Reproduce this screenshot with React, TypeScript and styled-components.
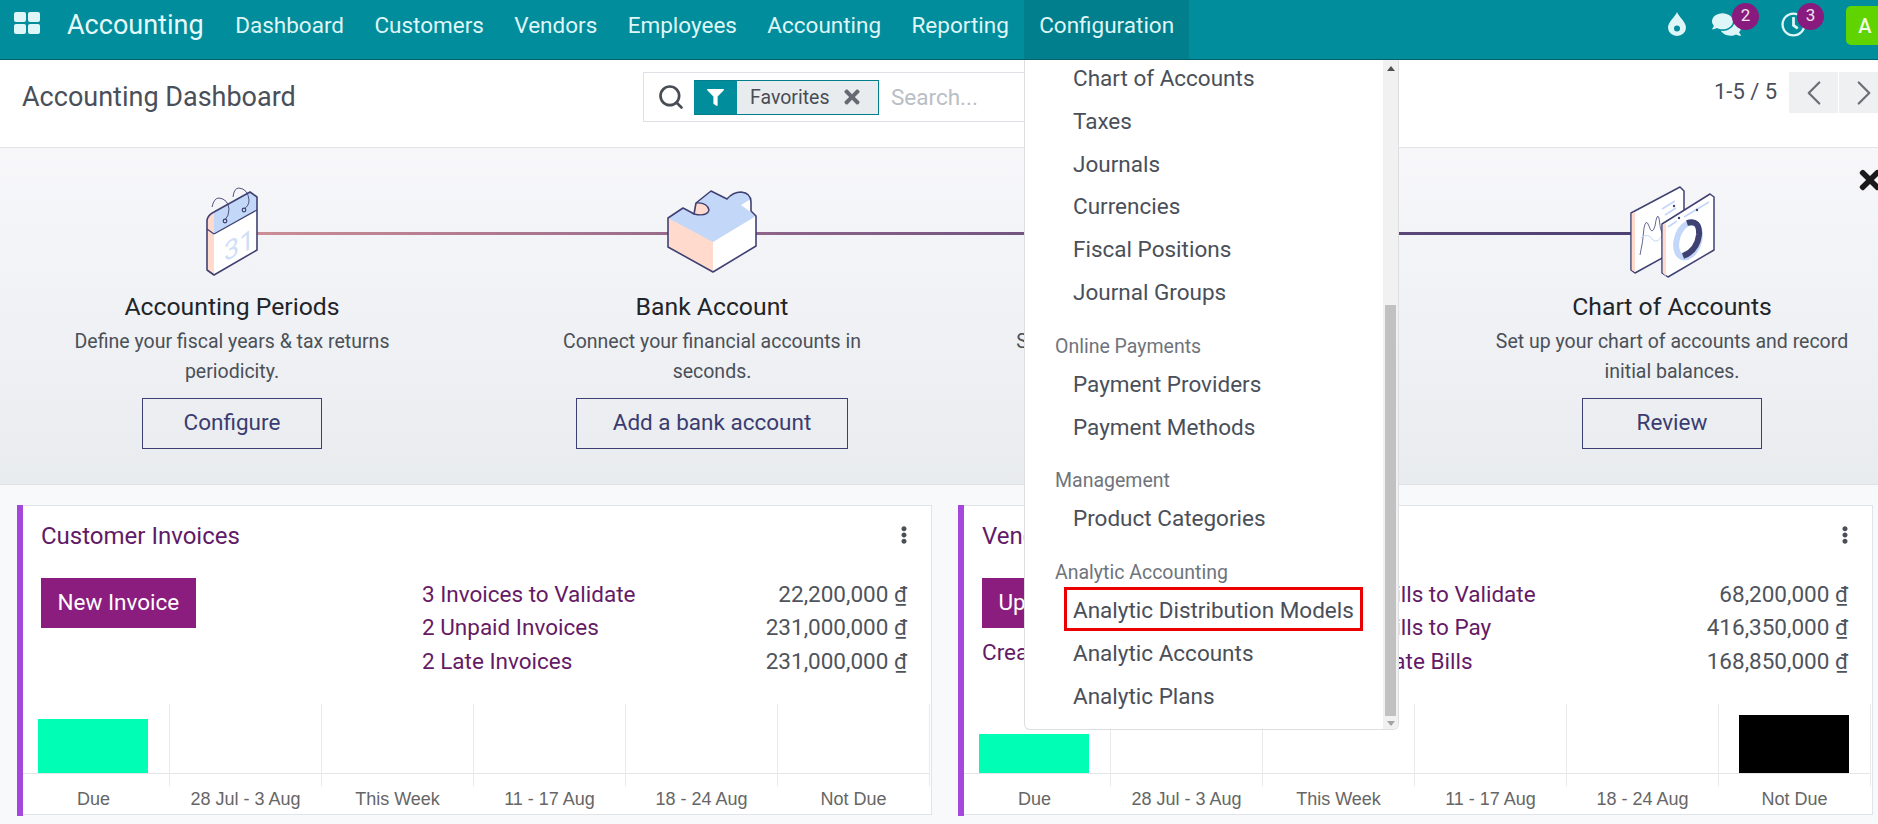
import React from "react";
import styled, { createGlobalStyle } from "styled-components";
import { FaComments, FaEllipsisV, FaFilter, FaRegClock, FaTimes } from "react-icons/fa";
import { Search, ChevronLeft, ChevronRight } from "lucide-react";

const GlobalStyle = createGlobalStyle`
  html, body {
    margin: 0;
    width: 1878px;
    height: 824px;
    overflow: hidden;
    background: #f8f9fa;
    font-family: Roboto, "Liberation Sans", sans-serif;
    color: #4a4f59;
  }
`;

const Page = styled.div`
  width: 1878px;
  height: 824px;
  overflow: hidden;
  display: flex;
  flex-direction: column;
`;

/* top bar */
const NavBar = styled.nav`
  position: relative;
  z-index: 5;
  flex: none;
  display: flex;
  height: 60px;
  box-sizing: border-box;
  background: #018d9b;
  border-bottom: 1px solid #00626c;
  color: #dff6f8;
`;
const AppsButton = styled.div`
  width: 67px;
  height: 45px;
  padding-left: 14px;
  box-sizing: border-box;
  display: flex;
  align-items: center;
`;
const Brand = styled.div`
  display: flex;
  align-items: center;
  height: 50px;
  width: 153px;
  font-size: 27px;
  color: #e6f9fa;
`;
const NavItem = styled.div<{ $active?: boolean }>`
  position: relative;
  display: flex;
  align-items: center;
  height: 59px;
  box-sizing: border-box;
  padding: 0 15.2px 9px;
  font-size: 22.5px;
  background: ${(p) => (p.$active ? "#017f8c" : "transparent")};
`;
const Tray = styled.div`
  margin-left: auto;
  margin-right: -6px;
  display: flex;
  align-items: flex-start;
`;
const TrayCell = styled.div<{ $w: number }>`
  position: relative;
  width: ${(p) => p.$w}px;
  height: 48px;
  display: flex;
  align-items: center;
  justify-content: center;
`;
const Badge = styled.span<{ $left: number }>`
  position: absolute;
  left: ${(p) => p.$left}px;
  top: 3px;
  width: 27px;
  height: 27px;
  border-radius: 50%;
  background: #891b7e;
  color: #f3e6f1;
  font-size: 17px;
  line-height: 25px;
  text-align: center;
`;
const Avatar = styled.div`
  margin: 6px 0 0 13px;
  width: 38px;
  height: 39px;
  border-radius: 5px;
  background: #5fd400;
  color: #f0fbe4;
  font-size: 20px;
  font-weight: 500;
  line-height: 40px;
  text-align: center;
`;

/* dropdown */
const Menu = styled.div`
  position: absolute;
  left: 0;
  top: 100%;
  margin-top: 1px;
  width: 375px;
  height: 670px;
  box-sizing: border-box;
  display: flex;
  background: #fff;
  border: 1px solid #dcdee1;
  border-top: none;
  border-radius: 0 0 6px 6px;
  color: #4a4f59;
  overflow: hidden;
`;
const MenuBody = styled.div`
  flex: 1;
  margin-top: -3px;
`;
const MenuHeader = styled.div`
  margin-top: 16px;
  height: 33px;
  padding-left: 30px;
  font-size: 19.5px;
  line-height: 33px;
  color: #6f747c;
`;
const MenuItem = styled.div`
  position: relative;
  height: 42.8px;
  padding-left: 48px;
  font-size: 22.5px;
  line-height: 42.8px;
`;
const Highlight = styled.span`
  position: absolute;
  left: 39px;
  top: -2px;
  width: 299px;
  height: 44px;
  box-sizing: border-box;
  border: 3px solid #ea0000;
`;
const ScrollBar = styled.div`
  flex: none;
  width: 15px;
  background: #f1f1f1;
  display: flex;
  flex-direction: column;
  align-items: center;
`;
const ArrowUp = styled.span`
  margin-top: 6px;
  border: 4px solid transparent;
  border-top: none;
  border-bottom: 5px solid #505050;
`;
const ArrowDown = styled.span`
  margin-top: 5px;
  border: 4px solid transparent;
  border-bottom: none;
  border-top: 5px solid #a3a3a3;
`;
const Thumb = styled.span`
  margin-top: 234px;
  width: 11px;
  height: 411px;
  background: #c1c1c1;
`;

/* control panel */
const ControlPanel = styled.div`
  flex: none;
  height: 88px;
  box-sizing: border-box;
  display: grid;
  grid-template-columns: 621px 1071px 1fr;
  padding: 12px 0 0 22px;
  background: #fff;
  border-bottom: 1.5px solid #e1e3e6;
`;
const Title = styled.div`
  height: 50px;
  font-size: 27px;
  line-height: 50px;
`;
const SearchBox = styled.div`
  width: 600px;
  height: 50px;
  box-sizing: border-box;
  display: flex;
  align-items: center;
  padding-left: 13px;
  border: 1.5px solid #dee2e6;
  color: #484d55;
`;
const Facet = styled.div`
  margin-left: 9px;
  height: 35px;
  width: 185px;
  box-sizing: border-box;
  display: flex;
  align-items: center;
  border: 1.5px solid #017e8c;
  background: #e9ecef;
  font-size: 19.5px;
`;
const FacetIcon = styled.span`
  align-self: stretch;
  width: 43px;
  margin-left: -1px;
  display: flex;
  align-items: center;
  justify-content: center;
  background: #018d9b;
  color: #fff;
`;
const FacetLabel = styled.span`
  flex: 1;
  padding-left: 13px;
`;
const FacetClose = styled.span`
  display: flex;
  margin-right: 15px;
  color: #666a72;
`;
const SearchHint = styled.span`
  margin-left: 12px;
  font-size: 22.5px;
  color: #b9bec5;
`;
const Pager = styled.div`
  display: flex;
  align-items: flex-start;
  gap: 1px;
  font-size: 22px;
`;
const PagerText = styled.span`
  width: 74px;
  line-height: 41px;
  margin-top: -1px;
`;
const PagerButton = styled.span`
  flex: none;
  width: 49px;
  height: 41px;
  display: flex;
  align-items: center;
  justify-content: center;
  background: #eff0f2;
  color: #6b6f76;
`;

/* onboarding banner */
const Banner = styled.div`
  position: relative;
  flex: none;
  height: 337px;
  box-sizing: border-box;
  background: linear-gradient(#f7f7fa, #e9ecef);
  border-bottom: 1.5px solid #dee2e6;
`;
const Steps = styled.div`
  position: relative;
  width: 1920px;
  margin-left: -8px;
  padding-top: 34px;
  display: grid;
  grid-template-columns: repeat(4, 480px);

  &::before {
    content: "";
    position: absolute;
    left: 240px;
    width: 1440px;
    top: 84px;
    height: 3px;
    background: linear-gradient(90deg, #cf8f96, #94688a 33%, #6b4f7f 60%, #4b4070);
  }
`;
const Step = styled.div`
  position: relative;
  display: flex;
  flex-direction: column;
  align-items: center;
`;
const StepIcon = styled.div`
  height: 100px;
  display: flex;
  align-items: center;
  justify-content: center;
`;
const StepTitle = styled.div`
  margin-top: 7px;
  font-size: 24.75px;
  line-height: 36px;
  color: #212529;
`;
const StepText = styled.div`
  margin-top: 2px;
  width: 360px;
  font-size: 19.5px;
  line-height: 30px;
  text-align: center;
  color: #4b5058;
`;
const StepButton = styled.div`
  margin-top: 11px;
  min-width: 180px;
  height: 51px;
  box-sizing: border-box;
  padding: 0 36px;
  border: 1.5px solid #3d3f72;
  font-size: 22.5px;
  line-height: 46px;
  text-align: center;
  color: #3a3c70;
`;
const BannerClose = styled.span`
  position: absolute;
  left: 1855px;
  top: 17px;
  display: flex;
  color: #1a1a1a;
`;

/* journal cards */
const Cards = styled.div`
  display: flex;
  gap: 26px;
  padding: 20px 0 0 17px;
`;
const Card = styled.div`
  position: relative;
  flex: none;
  width: 915px;
  height: 310px;
  box-sizing: border-box;
  display: flex;
  flex-direction: column;
  background: #fff;
  border: 1.5px solid #e1e4e8;

  &::before {
    content: "";
    position: absolute;
    z-index: 1;
    left: -1.5px;
    top: -1.5px;
    bottom: -1.5px;
    width: 6px;
    background: #a546dd;
  }
`;
const CardHead = styled.div`
  height: 72px;
  flex: none;
  box-sizing: border-box;
  display: flex;
  justify-content: space-between;
  padding: 12px 18.5px 0 23px;
`;
const CardTitle = styled.div`
  font-size: 24px;
  line-height: 36px;
  color: #611a66;
`;
const Kebab = styled.span`
  margin-top: 8px;
  color: #4b5058;
`;
const CardBody = styled.div`
  display: grid;
  grid-template-columns: 381px 1fr;
  padding: 0 24px 0 23px;
  height: 126px;
`;
const PrimaryButton = styled.div`
  width: fit-content;
  height: 50px;
  padding: 0 16.5px;
  background: #8a1d7e;
  color: #fff;
  font-size: 22.5px;
  line-height: 48px;
`;
const CreateLink = styled.div`
  margin-top: 8px;
  font-size: 22.5px;
  line-height: 33px;
  color: #641a66;
`;
const StatRow = styled.div`
  display: flex;
  justify-content: space-between;
  height: 33.4px;
  font-size: 22.5px;
  line-height: 33.4px;
`;
const StatLink = styled.span`
  color: #641a66;
`;
const Amount = styled.span`
  color: #4f545c;
`;

const Chart = styled.div`
  display: grid;
  grid-template-columns: repeat(6, 152px);
`;
const Plot = styled.div`
  height: 82px;
  box-sizing: border-box;
  border-right: 1.5px solid #e9eaec;
`;
const PlotArea = styled.div`
  height: 70px;
  box-sizing: border-box;
  display: flex;
  align-items: flex-end;
  justify-content: center;
  padding-right: 2px;
  border-bottom: 1.5px solid #e4e5e8;
`;
const Bar = styled.div<{ $h: number; $color: string }>`
  width: 110px;
  height: ${(p) => p.$h}px;
  background: ${(p) => p.$color};
`;
const AxisLabel = styled.div`
  height: 27px;
  padding-right: 1px;
  font-family: "Liberation Sans", Arial, sans-serif;
  font-size: 18px;
  line-height: 27px;
  text-align: center;
  color: #666;
`;

const AppsIcon = () => (
  <svg width="26" height="22" viewBox="0 0 26 22" fill="#dff6f8">
    <rect width="12" height="10" rx="2" />
    <rect x="14" width="12" height="10" rx="2" />
    <rect y="12" width="12" height="10" rx="2" />
    <rect x="14" y="12" width="12" height="10" rx="2" />
  </svg>
);

const DropIcon = () => (
  <svg width="18" height="24" viewBox="0 0 18 24">
    <path d="M9 0C11 5 18 10 18 15.5A9 8.5 0 0 1 0 15.5C0 10 7 5 9 0Z" fill="#dff6f8" />
    <circle cx="9" cy="16.5" r="3" fill="#018d9b" />
  </svg>
);

const CalendarIcon = () => (
  <svg width="52" height="90" viewBox="0 0 52 90" strokeLinejoin="round">
    <path d="M1 33L8 25L44 5L51 10V63L8 88L1 83Z" fill="#fff" />
    <path d="M1 33L8 25V88L1 83Z" fill="#ffdacd" />
    <path d="M1 33Q2 28 8 25L44 5L51 10V23L8 47L1 42Z" fill="#c3d7f8" />
    <path d="M1 33Q2 28 8 25V47L1 42Z" fill="#ffdacd" />
    <path d="M8 47L51 23" fill="none" stroke="#3f4173" strokeWidth="1.2" />
    <path d="M1 42L8 47" fill="none" stroke="#3f4173" strokeWidth="1.2" />
    <path d="M1 33Q2 28 8 25L44 5L51 10V63L8 88L1 83Z" fill="none" stroke="#3f4173" strokeWidth="1.6" />
    <path d="M6 20Q8 11 13 11Q22 12 23 22Q23 29 19 33" fill="none" stroke="#3f4173" strokeWidth="0.9" />
    <path d="M27 10Q28 1 33 1Q42 2 43 13Q43 19 38 22" fill="none" stroke="#3f4173" strokeWidth="0.9" />
    <circle cx="19" cy="34" r="1.8" fill="#c3d7f8" stroke="#3f4173" strokeWidth="1.2" />
    <circle cx="38" cy="23" r="1.8" fill="#c3d7f8" stroke="#3f4173" strokeWidth="1.2" />
    <text x="0" y="0" transform="matrix(1 -0.5 0 1 18 75)" fontFamily="Roboto, sans-serif" fontSize="27" fill="#cfdff6">
      31
    </text>
  </svg>
);

const PuzzleIcon = () => (
  <svg width="90" height="84" viewBox="0 0 90 84" strokeLinejoin="round">
    <path
      d="M1 28L16 18Q22 21 27 24L29 13L44 1L60 9Q66 2 74 2Q84 3 84 12V21L89 26V56L46 82L1 57Z"
      fill="#c3d7f8"
    />
    <path d="M1 28L46 52V82L1 57Z" fill="#ffdacd" />
    <path d="M46 52L89 26V56L46 82Z" fill="#fff" />
    <path d="M74 15L84 9V21L89 26Z" fill="#fff" />
    <path d="M29 13Q40 12 42 20Q40 27 27 24Z" fill="#ffdacd" />
    <path
      d="M1 28L16 18Q22 21 27 24L29 13L44 1L60 9Q66 2 74 2Q84 3 84 12V21L89 26V56L46 82L1 57Z"
      fill="none"
      stroke="#3f4173"
      strokeWidth="1.6"
    />
    <path d="M29 13Q40 12 42 20Q40 27 27 24" fill="none" stroke="#3f4173" strokeWidth="1.4" />
  </svg>
);

const ReportIcon = () => (
  <svg width="85" height="92" viewBox="0 0 85 92" strokeLinejoin="round" fill="none">
    <path d="M1 27L50 1L54 5V60L5 87L1 84Z" fill="#fff" stroke="#3f4173" strokeWidth="1.5" />
    <path d="M1.8 27.5L5 26V86L1.8 84Z" fill="#ffdacd" />
    <path d="M32 23L45 15M35 29L46 22" stroke="#c3d7f8" strokeWidth="1.6" />
    <circle cx="44" cy="20" r="1.2" fill="#3f4173" />
    <path d="M10 69Q13 56 14 42Q16 32 19 40Q22 50 25 40Q27 26 29 32Q30 44 33 50" stroke="#3f4173" strokeWidth="0.8" />
    <path d="M11 52Q18 46 23 54Q28 58 33 48" stroke="#c3d7f8" strokeWidth="1" />
    <path d="M32 38L80 8L84 11V64L38 91L32 87Z" fill="#fff" stroke="#3f4173" strokeWidth="1.5" />
    <path d="M32.8 38.5L36 37V90L32.8 87Z" fill="#ffdacd" />
    <path d="M38 41L47 35M54 31L79 16" stroke="#c3d7f8" strokeWidth="1.6" />
    <circle cx="49" cy="32" r="1.2" fill="#3f4173" />
    <circle cx="67" cy="24" r="1.2" fill="#3f4173" />
    <ellipse cx="58" cy="54" rx="11" ry="18" transform="rotate(18 58 54)" stroke="#c3d7f8" strokeWidth="6" />
    <path d="M57 37Q70 33 69 49Q67 65 53 70" stroke="#3f4173" strokeWidth="6" />
  </svg>
);

const menuGroups = [
  { items: ["Chart of Accounts", "Taxes", "Journals", "Currencies", "Fiscal Positions", "Journal Groups"] },
  { title: "Online Payments", items: ["Payment Providers", "Payment Methods"] },
  { title: "Management", items: ["Product Categories"] },
  { title: "Analytic Accounting", items: ["Analytic Distribution Models", "Analytic Accounts", "Analytic Plans"] },
];

const steps = [
  { title: "Accounting Periods", text: "Define your fiscal years & tax returns periodicity.", action: "Configure", icon: <CalendarIcon /> },
  { title: "Bank Account", text: "Connect your financial accounts in seconds.", action: "Add a bank account", icon: <PuzzleIcon /> },
  { title: "Taxes", text: "Set default Taxes for sales and purchase transactions.", action: "Review", icon: null },
  { title: "Chart of Accounts", text: "Set up your chart of accounts and record initial balances.", action: "Review", icon: <ReportIcon /> },
];

const axis = ["Due", "28 Jul - 3 Aug", "This Week", "11 - 17 Aug", "18 - 24 Aug", "Not Due"];

const cards = [
  {
    title: "Customer Invoices",
    action: "New Invoice",
    stats: [
      ["3 Invoices to Validate", "22,200,000"],
      ["2 Unpaid Invoices", "231,000,000"],
      ["2 Late Invoices", "231,000,000"],
    ],
    bars: [54, 0, 0, 0, 0, 0],
  },
  {
    title: "Vendor Bills",
    action: "Upload",
    link: "Create Manually",
    stats: [
      ["3 Bills to Validate", "68,200,000"],
      ["5 Bills to Pay", "416,350,000"],
      ["4 Late Bills", "168,850,000"],
    ],
    bars: [39, 0, 0, 0, 0, 58],
  },
];

export default function App() {
  return (
    <Page>
      <GlobalStyle />
      <NavBar>
        <AppsButton>
          <AppsIcon />
        </AppsButton>
        <Brand>Accounting</Brand>
        {["Dashboard", "Customers", "Vendors", "Employees", "Accounting", "Reporting"].map((n) => (
          <NavItem key={n}>{n}</NavItem>
        ))}
        <NavItem $active>
          Configuration
          <Menu>
            <MenuBody>
              {menuGroups.map((g, i) => (
                <div key={i}>
                  {g.title && <MenuHeader>{g.title}</MenuHeader>}
                  {g.items.map((item) => (
                    <MenuItem key={item}>
                      {item}
                      {item === "Analytic Distribution Models" && <Highlight />}
                    </MenuItem>
                  ))}
                </div>
              ))}
            </MenuBody>
            <ScrollBar>
              <ArrowUp />
              <Thumb />
              <ArrowDown />
            </ScrollBar>
          </Menu>
        </NavItem>
        <Tray>
          <TrayCell $w={44}>
            <DropIcon />
          </TrayCell>
          <TrayCell $w={54}>
            <FaComments size={29} />
            <Badge $left={33}>2</Badge>
          </TrayCell>
          <TrayCell $w={80}>
            <FaRegClock size={25} />
            <Badge $left={44}>3</Badge>
          </TrayCell>
          <Avatar>A</Avatar>
        </Tray>
      </NavBar>

      <ControlPanel>
        <Title>Accounting Dashboard</Title>
        <div>
          <SearchBox>
            <Search size={28} strokeWidth={2.3} />
            <Facet>
              <FacetIcon>
                <FaFilter size={17} />
              </FacetIcon>
              <FacetLabel>Favorites</FacetLabel>
              <FacetClose>
                <FaTimes size={22} />
              </FacetClose>
            </Facet>
            <SearchHint>Search...</SearchHint>
          </SearchBox>
        </div>
        <Pager>
          <PagerText>1-5 / 5</PagerText>
          <PagerButton>
            <ChevronLeft size={42} strokeWidth={1.3} />
          </PagerButton>
          <PagerButton>
            <ChevronRight size={42} strokeWidth={1.3} />
          </PagerButton>
        </Pager>
      </ControlPanel>

      <Banner>
        <Steps>
          {steps.map((s) => (
            <Step key={s.title}>
              <StepIcon>{s.icon}</StepIcon>
              <StepTitle>{s.title}</StepTitle>
              <StepText>{s.text}</StepText>
              <StepButton>{s.action}</StepButton>
            </Step>
          ))}
        </Steps>
        <BannerClose>
          <FaTimes size={30} />
        </BannerClose>
      </Banner>

      <Cards>
        {cards.map((c) => (
          <Card key={c.title}>
            <CardHead>
              <CardTitle>{c.title}</CardTitle>
              <Kebab>
                <FaEllipsisV size={18} />
              </Kebab>
            </CardHead>
            <CardBody>
              <div>
                <PrimaryButton>{c.action}</PrimaryButton>
                {c.link && <CreateLink>{c.link}</CreateLink>}
              </div>
              <div>
                {c.stats.map(([label, value]) => (
                  <StatRow key={label}>
                    <StatLink>{label}</StatLink>
                    <Amount>
                      {value} <u>₫</u>
                    </Amount>
                  </StatRow>
                ))}
              </div>
            </CardBody>
            <Chart>
              {axis.map((label, i) => (
                <div key={label}>
                  <Plot>
                    <PlotArea>
                      {c.bars[i] > 0 && <Bar $h={c.bars[i]} $color={i === 0 ? "#00ffb4" : "#000"} />}
                    </PlotArea>
                  </Plot>
                  <AxisLabel>{label}</AxisLabel>
                </div>
              ))}
            </Chart>
          </Card>
        ))}
      </Cards>
    </Page>
  );
}
